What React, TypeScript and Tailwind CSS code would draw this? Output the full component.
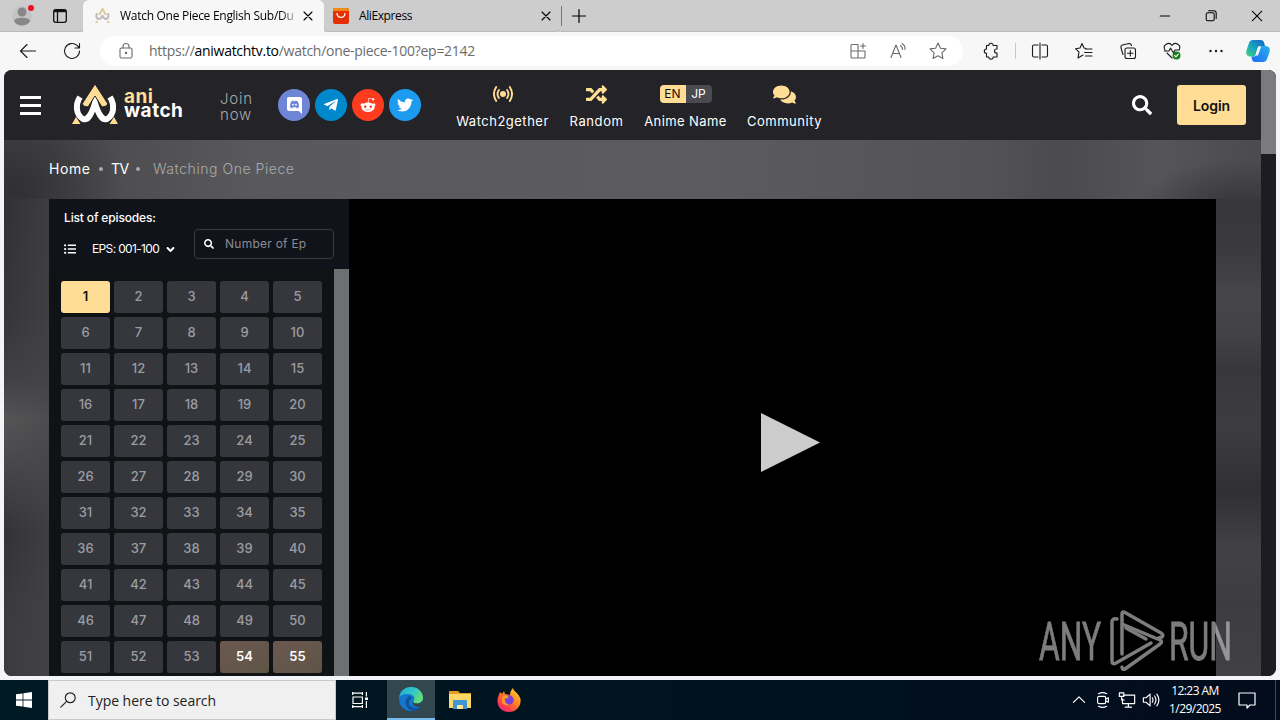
import type { ReactNode } from "react";
import { FaAngleDown, FaComments, FaListUl, FaRandom, FaRedditAlien, FaSearch, FaTelegramPlane, FaTwitter } from "react-icons/fa";

interface IconProps {
  size?: number;
  className?: string;
  children: ReactNode;
}

// Thin outline icons used by the browser chrome and the system tray
const LineIcon = ({ size = 20, className = "", children }: IconProps) => (
  <svg
    width={size}
    height={size}
    viewBox="0 0 20 20"
    fill="none"
    stroke="currentColor"
    strokeWidth="1.1"
    strokeLinecap="round"
    strokeLinejoin="round"
    className={`shrink-0 ${className}`}
  >
    {children}
  </svg>
);

const CloseIcon = () => (
  <LineIcon size={16} className="text-black">
    <path d="M5 5l10 10M15 5L5 15" strokeWidth="1.4" />
  </LineIcon>
);

const TabStrip = () => (
  <div className="flex h-8 items-stretch bg-[#cdcdcd]">
    <div className="flex w-[83px] items-center rounded-br-sm border-b border-[#b9b9b9]">
      <div className="relative ml-3 h-5 w-5">
        <svg width="20" height="20" viewBox="0 0 20 20" className="overflow-hidden rounded-full bg-[#c4c4c4]">
          <circle cx="10" cy="6" r="4.5" fill="#8a8787" />
          <path d="M2 15c0-4.500 16-4.500 16 0-2 6-14 6-16 0z" fill="#8a8787" />
        </svg>
        <span className="absolute -top-[1px] left-4 h-[6px] w-[6px] rounded-full bg-[#e81123]"></span>
      </div>
      <svg width="16" height="16" viewBox="0 0 16 16" fill="none" stroke="#111" strokeWidth="1.3" className="ml-5">
        <rect x="1.7" y="1.7" width="12.6" height="12.6" rx="2" />
        <path d="M2 3h12" strokeWidth="2.4" />
        <path d="M5.5 3v11" />
      </svg>
    </div>
    <div className="flex w-[241px] items-center rounded-t-md bg-[#f7f7f7] pl-[11px]">
      <svg width="17" height="16" viewBox="0 0 17 16" fill="none" strokeWidth="2">
        <path d="M3 5c-2 5 2 9 5.500 3 3.500 6 7 2 5.500-3" stroke="#bdbdbd" />
        <path d="M5 7l3.500-6L12 7" stroke="#dccb95" />
        <path d="M1 15l2-3 1 3zM16 15l-2-3-1 3z" fill="#dccb95" stroke="none" />
      </svg>
      <span className="ml-[9px] w-[178px] bg-gradient-to-r from-black from-88% to-[#e0e0e0] bg-clip-text text-xs tracking-[-0.28px] whitespace-nowrap text-transparent">
        Watch One Piece English Sub/Du
      </span>
      <span className="ml-[2px]"><CloseIcon /></span>
    </div>
    <div className="flex w-[237px] items-center rounded-b-md border-b border-[#b9b9b9] pl-[9px]">
      <svg width="16" height="16" viewBox="0 0 16 16">
        <rect width="16" height="16" rx="2" fill="#e62e04" />
        <path d="M0 2q0-2 2-2h12q2 0 2 2v1H0z" fill="#f08a18" />
        <path d="M4 5.500c.5 5.200 7.500 5.200 8 0" stroke="#fff" strokeWidth="1.3" fill="none" strokeLinecap="round" />
      </svg>
      <span className="ml-[10px] w-[179px] text-xs tracking-[-0.4px] text-black">AliExpress</span>
      <CloseIcon />
    </div>
    <div className="flex flex-1 items-center border-b border-[#b9b9b9]">
      <div className="h-5 w-px bg-[#777]"></div>
      <LineIcon size={20} className="ml-[7px] text-black">
        <path d="M10 3.500v13M3.500 10h13" strokeWidth="1.2" />
      </LineIcon>
      <div className="ml-auto flex items-center gap-[30px] pr-[15px] text-black">
        <LineIcon size={16}><path d="M4 10h12" strokeWidth="1.3" /></LineIcon>
        <LineIcon size={16}>
          <rect x="4" y="6" width="10" height="10" rx="2" strokeWidth="1.3" />
          <path d="M7 3.500h6.500q3 0 3 3V13" strokeWidth="1.3" />
        </LineIcon>
        <LineIcon size={16}><path d="M4 4l12 12M16 4L4 16" strokeWidth="1.3" /></LineIcon>
      </div>
    </div>
  </div>
);

const Toolbar = () => (
  <div className="flex h-[38px] items-center bg-[#f7f7f7] text-[#1b1b1b]">
    <LineIcon className="ml-[18px]"><path d="M17.500 10H2.500M9 3.500L2.500 10 9 16.500" /></LineIcon>
    <LineIcon className="ml-6">
      <path d="M17.500 10a7.500 7.500 0 1 1-2.500-5.600L17.500 7M17.500 2.500V7H13" />
    </LineIcon>
    <div className="ml-[18px] flex h-[30px] w-[863px] items-center rounded-full bg-white pl-4 text-[#6b6b6b]">
      <LineIcon>
        <rect x="4" y="7" width="12" height="10" rx="1.500" />
        <path d="M7 7V5.500a3 3 0 0 1 6 0V7" />
        <circle cx="10" cy="12" r=".7" fill="currentColor" />
      </LineIcon>
      <span className="ml-[13px] text-sm tracking-[-0.28px] whitespace-nowrap">
        https://<span className="text-black">aniwatchtv.to</span>/watch/one-piece-100?ep=2142
      </span>
      <div className="ml-auto flex items-center gap-5 pr-[15px]">
        <LineIcon>
          <path d="M10 3.500H4a1 1 0 0 0-1 1V16a1 1 0 0 0 1 1h12a1 1 0 0 0 1-1v-6H3M10 3.500V17M15 2.500v5M12.500 5h5" />
        </LineIcon>
        <LineIcon>
          <path d="M3 16.500L8 4l5 12.500M4.700 12.500h6.600M12.500 4.500q2 1.500 2 4M14 2.500q3.500 2 3 6" />
        </LineIcon>
        <LineIcon>
          <path d="M10 2l2.400 5.200 5.600.7-4.100 3.900 1 5.700-4.900-2.800-4.900 2.800 1-5.700L2 7.900l5.600-.7z" />
        </LineIcon>
      </div>
    </div>
    <LineIcon className="ml-[18px]">
      <path d="M5.500 4.500h2.300a2.200 2.200 0 0 1 4.400 0H16V8h-.5a2 2 0 0 0 0 4h.5v4h-3.800a2.200 2.200 0 0 1-4.400 0H5.500v-3.600a2.200 2.200 0 0 1 0-4.400z" />
    </LineIcon>
    <div className="ml-[14px] h-4 w-px bg-[#c8c8c8]"></div>
    <LineIcon className="ml-[14px]">
      <path d="M8 4H4a1.500 1.500 0 0 0-1.500 1.500v9A1.500 1.500 0 0 0 4 16h4M12 4h4a1.500 1.500 0 0 1 1.500 1.500v9A1.500 1.500 0 0 1 16 16h-4M10 2v16" />
    </LineIcon>
    <LineIcon className="ml-6">
      <path d="M12 7.500L10 7 8 2.500 6 7l-4.500.7L5 11.200 4 17l5-3M11.500 8h6.500M10.500 11.500H18M11.500 15H18" />
    </LineIcon>
    <LineIcon className="ml-6">
      <rect x="7" y="7" width="10.500" height="10.500" rx="2" />
      <path d="M12.300 9.500v5.500M9.500 12.300H15M5 13.500L3 7q-.5-2.500 1.500-3L11 2.500q2 0 2.500 2" />
    </LineIcon>
    <LineIcon className="ml-6">
      <path d="M3 9C0 4 7 0 10 4.500 13 0 20 4 17 9M2.500 10H7l1.500-3 3 5 1.500-3h4.500M5 12l5 5" />
      <circle cx="14.500" cy="14.500" r="4" fill="#15801c" stroke="none" />
      <path d="M12.600 14.500l1.300 1.300 2.400-2.600" stroke="#fff" />
    </LineIcon>
    <LineIcon className="ml-6">
      <g fill="currentColor" stroke="none">
        <circle cx="4.500" cy="10" r="1.200" />
        <circle cx="10" cy="10" r="1.200" />
        <circle cx="15.500" cy="10" r="1.200" />
      </g>
    </LineIcon>
    <CopilotIcon />
  </div>
);

const CopilotIcon = () => (
  <svg width="24" height="24" viewBox="0 0 24 24" className="ml-5 shrink-0">
    <defs>
      <linearGradient id="copilotLeft" x1="0" y1="1" x2="1" y2="0">
        <stop offset="0" stopColor="#4fd07f" />
        <stop offset=".45" stopColor="#16a8bb" />
        <stop offset="1" stopColor="#1560c8" />
      </linearGradient>
      <linearGradient id="copilotRight" x1="0" y1="1" x2="1" y2="0">
        <stop offset="0" stopColor="#1f6df5" />
        <stop offset="1" stopColor="#27b1ea" />
      </linearGradient>
    </defs>
    <path d="M7 1h8q2.500 0 3 2.500l1 3.500h-5q-2 0-2.600 2L9.500 16q-.5 1.500-2 1.500H4Q-.5 17 .3 12L3 4q1-3 4-3z" fill="url(#copilotLeft)" />
    <path d="M17 23H9q-2.500 0-3-2.500l-.5-3H8q2 0 2.600-2l2.500-7q.5-1.500 2-1.500H20q4.500.5 3.700 5.500L21 20q-1 3-4 3z" fill="url(#copilotRight)" />
    <path d="M9.500 16.500l3.300-9h2.400l-3.300 9z" fill="#f7f7f7" />
  </svg>
);

const Logo = () => (
  <div className="flex h-[42px] w-[116px] items-center">
    <svg width="47" height="42" viewBox="0 0 47 42" className="shrink-0">
      <path d="M8 13C3 21 4 31 11 35c5 2 9-6 12-16 3 10 7 18 12 16 7-4 8-14 3-22" fill="none" stroke="#fff" strokeWidth="6" />
      <path d="M23 0l13 20q-2 3-6 3l-7-11-7 11q-4 0-6-3z" fill="#ffdd95" stroke="#232328" strokeWidth="1" />
      <path d="M0 40l4-7 4.500 7zM46 40l-4-7-4.500 7z" fill="#ffdd95" />
    </svg>
    <div className="-mt-[3px] ml-[5px] text-[19px] leading-[14px] font-bold tracking-[0.5px] text-white">
      <div className="text-[#ffdd95]">ani</div>
      <div>watch</div>
    </div>
  </div>
);

// Speech-bubble version of the Discord mark
const DiscordIcon = () => (
  <svg width="15" height="17" viewBox="0 0 15 17">
    <path d="M1.800 0h11.400Q15 0 15 1.800V17l-3.200-3H1.800Q0 14 0 12.200V1.800Q0 0 1.800 0z" fill="#fff" />
    <path d="M3.200 10.500q-.7-3.700 1.200-6.200l2-.7.4.7h1.400l.4-.7 2 .7q1.900 2.500 1.200 6.200l-2 1-.6-1.200H5.800l-.6 1.200z" fill="#6f85d5" />
    <circle cx="6" cy="7.700" r=".9" fill="#fff" />
    <circle cx="9" cy="7.700" r=".9" fill="#fff" />
  </svg>
);

const BroadcastIcon = () => (
  <svg width="20" height="18" viewBox="0 0 20 18" fill="none" stroke="#ffdd95" strokeWidth="1.900" strokeLinecap="round">
    <circle cx="10" cy="9" r="3" fill="#ffdd95" stroke="none" />
    <path d="M5.900 5q-2.800 4 0 8M14.100 5q2.800 4 0 8M3.200 2q-4.500 7 0 14M16.800 2q4.500 7 0 14" />
  </svg>
);

interface NavItemProps {
  label: string;
  width: string;
  children: ReactNode;
}

const NavItem = ({ label, width, children }: NavItemProps) => (
  <div className={`flex shrink-0 flex-col items-center ${width}`}>
    <div className="flex h-[20px] items-center text-xl text-[#ffdd95]">{children}</div>
    <div className="mt-[7px] text-[13px] leading-5 whitespace-nowrap text-white">{label}</div>
  </div>
);

const SiteHeader = () => (
  <header className="flex h-[70px] shrink-0 items-center bg-[#232328] pl-4 text-white">
    <div className="flex w-[21px] flex-col gap-[5px]">
      <div className="h-[3px] bg-white"></div>
      <div className="h-[3px] bg-white"></div>
      <div className="h-[3px] bg-white"></div>
    </div>
    <div className="ml-[31px]"><Logo /></div>
    <div className="mt-1 ml-8 w-[58px] text-[15px] leading-4 font-light tracking-[0.8px] text-[#aaa]">Join now</div>
    <div className="flex gap-[5px]">
      <div className="flex h-8 w-8 items-center justify-center rounded-full bg-[#6f85d5]"><DiscordIcon /></div>
      <div className="flex h-8 w-8 items-center justify-center rounded-full bg-[#08c]"><FaTelegramPlane size={16} /></div>
      <div className="flex h-8 w-8 items-center justify-center rounded-full bg-[#ff3c1f]"><FaRedditAlien size={16} /></div>
      <div className="flex h-8 w-8 items-center justify-center rounded-full bg-[#1d9bf0]"><FaTwitter size={16} /></div>
    </div>
    <nav className="mt-[5px] ml-[35px] flex gap-5">
      <NavItem label="Watch2gether" width="w-[93px] tracking-[0.5px]"><BroadcastIcon /></NavItem>
      <NavItem label="Random" width="w-[55px] tracking-[0.6px]"><FaRandom size={21} /></NavItem>
      <NavItem label="Anime Name" width="w-[83px] tracking-[0.4px]">
        <div className="flex h-[18px] overflow-hidden rounded-sm text-xs leading-[18px] tracking-normal">
          <span className="w-[26px] bg-[#ffdd95] text-center text-[#111]">EN</span>
          <span className="w-[26px] bg-[#4a4b51] text-center text-white">JP</span>
        </div>
      </NavItem>
      <NavItem label="Community" width="w-[75px] tracking-[0.5px]"><FaComments size={23} /></NavItem>
    </nav>
    <FaSearch size={20} className="ml-auto" />
    <button className="mr-[15px] ml-[25px] h-10 w-[69px] rounded-[3px] bg-[#ffdd95] pt-0.5 text-sm font-semibold tracking-[-0.1px] text-[#111]">Login</button>
  </header>
);

const episodes = Array.from({ length: 55 }, (_, i) => i + 1);
const fillers = [54, 55];

const episodeStyle = (ep: number) => {
  if (ep === 1) return "bg-[#ffdd95] text-[#111] font-semibold";
  if (fillers.includes(ep)) return "bg-gradient-to-br from-[#6c5850] to-[#5d5546] text-white font-semibold";
  return "bg-[#35373d] text-[#9c9da1] font-medium";
};

const EpisodeList = () => (
  <aside className="flex w-[300px] shrink-0 flex-col bg-[#101315]">
    <div className="flex h-[70px] shrink-0 justify-between bg-[#11131a] pr-[15px] pl-[15px] text-white">
      <div>
        <div className="mt-[10px] text-xs leading-[18px] font-medium tracking-[-0.15px] whitespace-nowrap">List of episodes:</div>
        <div className="mt-[13px] flex items-center text-xs leading-[18px] whitespace-nowrap">
          <FaListUl size={12} />
          <span className="ml-4 w-[68px] tracking-[-0.65px]">EPS: 001-100</span>
          <FaAngleDown size={13} className="ml-1" />
        </div>
      </div>
      <div className="mt-[30px] flex h-[30px] w-[140px] items-center rounded border border-[#3a3c44] pl-[9px]">
        <FaSearch size={10} />
        <span className="ml-[11px] text-xs tracking-[0.25px] text-[#8b8c91]">Number of Ep</span>
      </div>
    </div>
    <div className="flex min-h-0 flex-1">
      <div className="grid flex-1 grid-cols-5 content-start gap-1 py-3 pl-3 pr-3">
        {episodes.map((ep) => (
          <div key={ep} className={`flex h-8 items-center justify-center rounded-[3px] text-[13px] ${episodeStyle(ep)}`}>
            {ep}
          </div>
        ))}
      </div>
      <div className="w-[15px] bg-[#6d7070]"></div>
    </div>
  </aside>
);

const Watermark = () => (
  <svg width="200" height="64" viewBox="0 0 200 64" className="absolute right-[37px] bottom-[2px] opacity-60">
    <g fill="#d0d0d0" stroke="#d0d0d0" strokeWidth=".8" fontFamily="Roboto, sans-serif" fontSize="53">
      <text x="0" y="50" textLength="62" lengthAdjust="spacingAndGlyphs">ANY</text>
      <text x="130" y="50" textLength="63" lengthAdjust="spacingAndGlyphs">RUN</text>
    </g>
    <g fill="none" stroke="#d0d0d0" strokeWidth="3.500" strokeLinejoin="round" strokeLinecap="round">
      <path d="M83 44V4q0-3 3-1.500L122 23q3 2 1 4l-3 1M83 14l38 16q3 2 0 4L86 59q-3 1-3-2" />
      <path d="M78 9q-5-1-5 3v39q0 4 4 2l35-20M87 18l20 11" />
    </g>
  </svg>
);

const WatchPage = () => (
  <main className="relative flex min-h-0 flex-1 overflow-hidden rounded-lg bg-[#1c1c22]">
    <div className="flex min-w-0 flex-1 flex-col">
      <SiteHeader />
      <div className="flex min-h-0 flex-1 flex-col bg-[#505054]">
        <div className="flex h-[59px] shrink-0 items-center gap-2 bg-[radial-gradient(ellipse_110px_100px_at_10px_50px,#303033,transparent),radial-gradient(ellipse_100px_45px_at_1235px_65px,#363639,transparent),linear-gradient(90deg,#444446,#59595d_20%,#5c5c5f_55%,#535357_78%,#4b4b4f_84%,#555559_92%,#4b4b4f)] pb-0.5 pl-[45px] text-sm text-white">
          <span className="w-[42px] tracking-[0.6px]">Home</span>
          <span className="h-1 w-1 rounded-full bg-[#aaa]"></span>
          <span className="w-[17px] tracking-[-0.5px]">TV</span>
          <span className="h-1 w-1 rounded-full bg-[#aaa]"></span>
          <span className="ml-[5px] font-light tracking-[0.55px] text-[#aaa]">Watching One Piece</span>
        </div>
        <div className="flex min-h-0 flex-1">
          <div className="w-[45px] bg-[linear-gradient(90deg,transparent,#46464a99),linear-gradient(180deg,#313133,#363638_25%,#414143_38%,#555556_46%,#4d4d4f_52%,#333335_70%,#3a3a3d_85%,#3d3a3d)]"></div>
          <EpisodeList />
          <div className="flex min-w-0 flex-1 items-center justify-center bg-black">
            <svg width="59" height="59" viewBox="0 0 59 59" className="mt-[9px] ml-4">
              <path d="M0 0l59 29.500L0 59z" fill="#ccc" />
            </svg>
          </div>
          <div className="w-[45px] bg-[linear-gradient(180deg,#37373b,#3a3a3e_10%,#464649_20%,#434347_28%,#38383c_36%,#3d3d40_48%,#303034_61%,#424246_73%,#3d3d41_85%,#414145)]"></div>
        </div>
      </div>
    </div>
    <div className="w-[15px] bg-[#1c1c22]">
      <div className="h-[84px] bg-[#7b7b7d]"></div>
    </div>
    <Watermark />
  </main>
);

const EdgeIcon = () => (
  <svg width="26" height="26" viewBox="0 0 26 26">
    <defs>
      <linearGradient id="edgeTop" x1="0" y1="0" x2="1" y2=".5">
        <stop offset="0" stopColor="#26a9df" />
        <stop offset=".6" stopColor="#31c9c4" />
        <stop offset="1" stopColor="#66df72" />
      </linearGradient>
    </defs>
    <circle cx="13" cy="13" r="12" fill="#1478cf" />
    <path d="M1.200 11C2.500 4 8 1 13 1c7 0 12 5 12 10.500 0 4-3 6-6 6-2.500 0-4-1-3.500-2 3-5-2-8-6-7.500-4 0-7.500 1.500-8.300 3z" fill="url(#edgeTop)" />
    <path d="M11 10c-6 4-4 13 4 15 3 0 6-1.500 8-4-6 2.500-13 0-12-5 .2-2 2-3 3-3.500-.5-1.500-1.500-2.500-3-2.500z" fill="#12539f" />
    <path d="M15.500 15.500c-.5 1 1 2 3.500 2 2.500 0 4-1 5.200-2.500 2 2 1.500 4-.7 5.500-4 1.500-9-.5-9-3.500 0-.6.400-1 1-1.500z" fill="#33474f" />
  </svg>
);

const FolderIcon = () => (
  <svg width="22" height="20" viewBox="0 0 22 20">
    <path d="M0 1h9l2 2h11v4H0z" fill="#e69b24" />
    <path d="M0 4h22v14H0z" fill="#ffd766" />
    <path d="M4 19V11q0-1 1-1h12q1 0 1 1v8h-4v-4H8v4z" fill="#3e97d3" />
    <path d="M8 19v-4h6v4z" fill="#ffe394" />
  </svg>
);

const FirefoxIcon = () => (
  <svg width="24" height="24" viewBox="0 0 24 24">
    <defs>
      <linearGradient id="firefoxBody" x1="1" y1="0" x2=".2" y2="1">
        <stop offset="0" stopColor="#ffe23a" />
        <stop offset=".45" stopColor="#ff8a1f" />
        <stop offset=".8" stopColor="#ff3a4d" />
        <stop offset="1" stopColor="#e5268c" />
      </linearGradient>
    </defs>
    <path d="M3 4l2 2 2-3 1 3 5 1c0-3 1-5 3-7 0 3 6 5 7.500 11C24.500 18 19 24 12 24 5 24 0 19 .5 12 .7 9 2 7 3 4z" fill="url(#firefoxBody)" />
    <circle cx="12" cy="12" r="4.700" fill="#7a41d8" />
    <path d="M5 9q4-3 7 0-2 2-4.500 1.500Q8 16 12 16.500 8 19 5 15z" fill="#ff9a26" />
  </svg>
);

const Taskbar = () => (
  <footer className="flex h-10 items-center bg-gradient-to-r from-[#001a24] via-[#00131f] to-[#020c1c] text-white">
    <div className="flex w-12 justify-center">
      <svg width="16" height="16" viewBox="0 0 16 16" fill="#fff">
        <path d="M0 2.300L6.600 1.400v6.200H0zM7.400 1.300L16 0v7.600H7.400zM0 8.400h6.600v6.200L0 13.700zM7.400 8.400H16V16l-8.600-1.300z" />
      </svg>
    </div>
    <div className="flex h-10 w-[288px] items-center border border-[#c9c9c9] bg-[#f0f0f0] pl-[10px] text-[#222]">
      <LineIcon size={18}>
        <circle cx="12.500" cy="7.500" r="5.500" strokeWidth="1.300" />
        <path d="M8.500 11.500L2 18" strokeWidth="1.300" />
      </LineIcon>
      <span className="mt-0.5 ml-[11px] text-sm tracking-[-0.04px]">Type here to search</span>
    </div>
    <div className="flex w-[51px] justify-center pr-[3px]">
      <svg width="16" height="16" viewBox="0 0 16 16" fill="none" stroke="#fff" strokeWidth="1.200">
        <path d="M0 1.200h11M.7 0v3M10.400 0v3M1 5h9.400v6.500H1zM0 14.600h11M.7 13v3M10.400 13v3M14.400 0v4.500M14.400 9v7" />
        <path d="M13 5.500h3v2.500h-3z" fill="#fff" stroke="none" />
      </svg>
    </div>
    <div className="flex h-10 w-12 items-center justify-center border-b-2 border-[#76b9ed] bg-[#33474f]"><EdgeIcon /></div>
    <div className="flex w-[49px] justify-center"><FolderIcon /></div>
    <div className="flex w-[49px] justify-center"><FirefoxIcon /></div>
    <div className="ml-auto flex items-center">
      <LineIcon size={16} className="mr-[7px]"><path d="M3 13l7-7 7 7" strokeWidth="1.500" /></LineIcon>
      <LineIcon size={18} className="mr-[6px]">
        <rect x="4" y="6" width="9" height="8" rx="1.500" strokeWidth="1.300" />
        <path d="M13 9l3-1.500v5L13 11M5 3q5-2.500 9 0M5 17q5 2.500 9 0" strokeWidth="1.300" />
      </LineIcon>
      <LineIcon size={18} className="mr-[6px]">
        <path d="M6 4.500h12.500v9.500H5V9M11.500 14v4M8 18h7M1.500 2h5v4h-5zM4 6v4h3" strokeWidth="1.300" />
      </LineIcon>
      <LineIcon size={18} className="mr-[9px]">
        <path d="M1.500 7.500h3L9 3.500v13l-4.500-4h-3zM11.500 7.500q1.500 2.500 0 5M14 5.500q3 4.500 0 9M16.500 3.500q4.500 6.500 0 13" strokeWidth="1.300" />
      </LineIcon>
      <div className="w-[52px] text-center text-xs leading-[18px] tracking-[-0.55px] whitespace-nowrap">
        <div>12:23 AM</div>
        <div>1/29/2025</div>
      </div>
      <LineIcon size={20} className="mr-[18px] ml-4">
        <path d="M2 3h16v12h-5l-3 3v-3H2z" strokeWidth="1.200" />
      </LineIcon>
      <div className="h-10 w-px bg-[#3c4856]"></div>
      <div className="w-1"></div>
    </div>
  </footer>
);

const App = () => {
  return (
    <div className="flex h-[720px] w-[1280px] flex-col overflow-hidden bg-[#f3f4f7] font-['Open_Sans',sans-serif]">
      <TabStrip />
      <Toolbar />
      <div className="flex min-h-0 flex-1 px-1 pb-1 font-['Inter',sans-serif]">
        <WatchPage />
      </div>
      <Taskbar />
    </div>
  );
};

export default App;
